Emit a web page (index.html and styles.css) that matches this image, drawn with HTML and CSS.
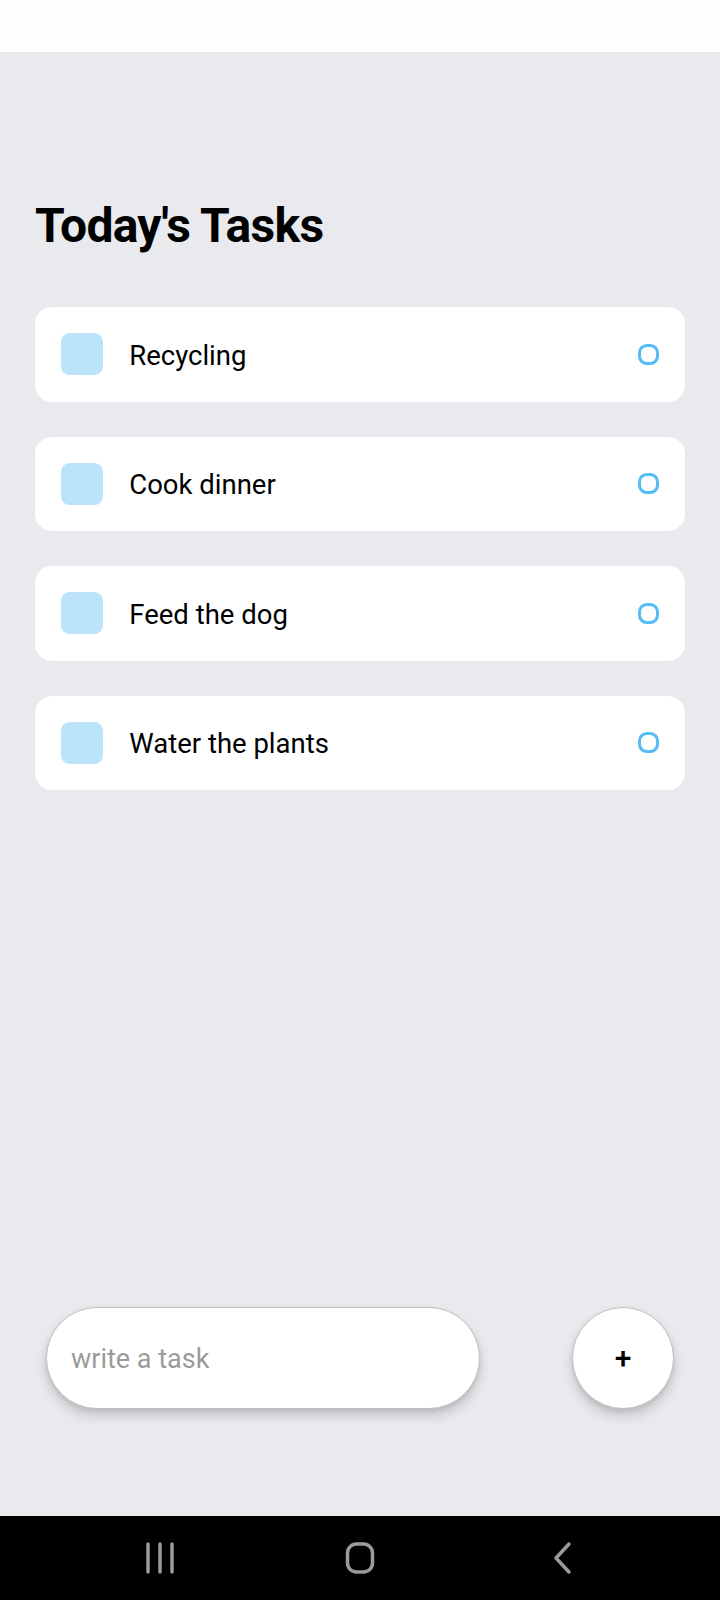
FILE: index.html
```html
<!DOCTYPE html>
<html lang="en">
<head>
<meta charset="utf-8">
<title>Today's Tasks</title>
<link rel="stylesheet" href="styles.css">
</head>
<body>
<div class="screen">
  <div class="status-bar"></div>
  <main class="app">
    <section class="tasks">
      <h1 class="title">Today's Tasks</h1>
      <div class="items">
        <div class="item">
          <div class="item-left">
            <div class="square"></div>
            <span class="item-text">Recycling</span>
          </div>
          <div class="circular"></div>
        </div>
        <div class="item">
          <div class="item-left">
            <div class="square"></div>
            <span class="item-text">Cook dinner</span>
          </div>
          <div class="circular"></div>
        </div>
        <div class="item">
          <div class="item-left">
            <div class="square"></div>
            <span class="item-text">Feed the dog</span>
          </div>
          <div class="circular"></div>
        </div>
        <div class="item">
          <div class="item-left">
            <div class="square"></div>
            <span class="item-text">Water the plants</span>
          </div>
          <div class="circular"></div>
        </div>
      </div>
    </section>
    <div class="write-wrapper">
      <input class="input" type="text" placeholder="write a task">
      <button class="add" type="button">+</button>
    </div>
  </main>
  <nav class="nav-bar">
    <div class="nav-icon">
      <svg width="40" height="34" viewBox="0 0 40 34">
        <g stroke="#9b9b9b" stroke-width="3.5" stroke-linecap="round">
          <line x1="8" y1="3" x2="8" y2="31"/>
          <line x1="20" y1="3" x2="20" y2="31"/>
          <line x1="32" y1="3" x2="32" y2="31"/>
        </g>
      </svg>
    </div>
    <div class="nav-icon">
      <svg width="40" height="34" viewBox="0 0 40 34">
        <rect x="7.5" y="3" width="25" height="28" rx="9" ry="9" fill="none" stroke="#9b9b9b" stroke-width="3.5"/>
      </svg>
    </div>
    <div class="nav-icon">
      <svg width="40" height="34" viewBox="0 0 40 34">
        <polyline points="29,3 16,17 29,31" fill="none" stroke="#9b9b9b" stroke-width="3.5" stroke-linecap="round" stroke-linejoin="round"/>
      </svg>
    </div>
  </nav>
</div>
</body>
</html>
```

FILE: styles.css
```css
* {
  box-sizing: border-box;
}

html, body {
  margin: 0;
  padding: 0;
}

body {
  font-family: Roboto, "Noto Sans", "Liberation Sans", sans-serif;
  background: #e8eaed;
}

.screen {
  width: 720px;
  height: 1600px;
  display: flex;
  flex-direction: column;
}

.status-bar {
  height: 52px;
  flex: none;
  background: #fefefe;
}

.app {
  flex: 1;
  display: flex;
  flex-direction: column;
  background: #e8eaed;
}

.tasks {
  flex: 1;
  padding: 146px 35px 0;
}

.title {
  margin: 0;
  font-size: 48px;
  line-height: 56px;
  font-weight: 700;
  color: #000;
  letter-spacing: -0.7px;
}

.items {
  margin-top: 53px;
  display: flex;
  flex-direction: column;
  gap: 35px;
}

.item {
  background: #fff;
  border-radius: 17px;
  padding: 26.25px;
  display: flex;
  align-items: center;
  justify-content: space-between;
}

.item-left {
  display: flex;
  align-items: center;
}

.square {
  width: 42px;
  height: 42px;
  border-radius: 8.75px;
  background: #bbe4fa;
  margin-right: 26px;
  flex: none;
}

.item-text {
  font-size: 27.5px;
  line-height: 32px;
  color: #000;
  margin-top: 3px;
}

.circular {
  width: 21px;
  height: 21px;
  border: 3.5px solid #55bcf6;
  border-radius: 8.75px;
  flex: none;
}

.write-wrapper {
  flex: none;
  display: flex;
  justify-content: space-around;
  align-items: center;
  margin-bottom: 107px;
}

.input {
  width: 434px;
  height: 102px;
  border: 1px solid #c0c0c0;
  border-radius: 60px;
  background: #fff;
  padding: 2px 24px 0;
  font-family: Roboto, "Noto Sans", "Liberation Sans", sans-serif;
  font-size: 27px;
  color: #000;
  outline: none;
  box-shadow: 0 7px 12px rgba(0, 0, 0, 0.16), 0 2px 4px rgba(0, 0, 0, 0.08);
}

.input::placeholder {
  color: #9b9b9b;
}

.add {
  width: 102px;
  height: 102px;
  border: 1px solid #c0c0c0;
  border-radius: 50%;
  background: #fff;
  padding: 0;
  font-family: Roboto, "Noto Sans", "Liberation Sans", sans-serif;
  font-size: 30px;
  font-weight: 500;
  line-height: 1;
  color: #000;
  display: flex;
  align-items: center;
  justify-content: center;
  box-shadow: 0 7px 12px rgba(0, 0, 0, 0.16), 0 2px 4px rgba(0, 0, 0, 0.08);
}

.nav-bar {
  height: 84px;
  flex: none;
  background: #000;
  display: flex;
  justify-content: center;
  align-items: center;
  gap: 160px;
}

.nav-icon {
  width: 40px;
  height: 34px;
  display: flex;
  align-items: center;
  justify-content: center;
}

.nav-icon svg {
  display: block;
}
```
